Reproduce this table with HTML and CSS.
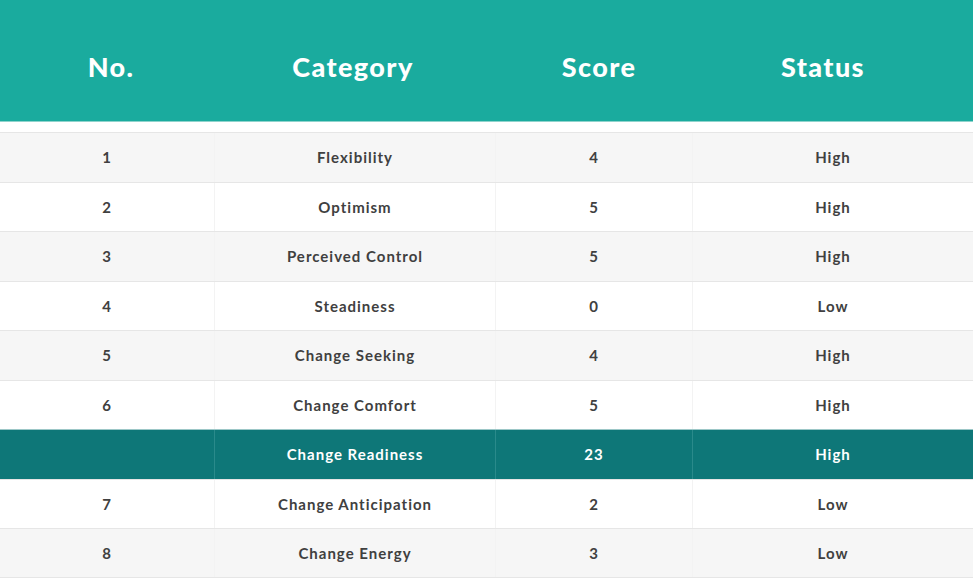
FILE: index.html
```html
<!DOCTYPE html>
<html>
<head>
<meta charset="utf-8">
<link rel="stylesheet" href="styles.css">
</head>
<body>
<div class="table">
  <div class="head">
    <div class="hcell">No.</div>
    <div class="hcell">Category</div>
    <div class="hcell">Score</div>
    <div class="hcell">Status</div>
    <div class="hcell"></div>
  </div>
  <div class="gap"></div>
  <div class="body">
    <div class="row alt"><div class="cell">1</div><div class="cell">Flexibility</div><div class="cell">4</div><div class="cell">High</div></div>
    <div class="row"><div class="cell">2</div><div class="cell">Optimism</div><div class="cell">5</div><div class="cell">High</div></div>
    <div class="row alt"><div class="cell">3</div><div class="cell">Perceived Control</div><div class="cell">5</div><div class="cell">High</div></div>
    <div class="row"><div class="cell">4</div><div class="cell">Steadiness</div><div class="cell">0</div><div class="cell">Low</div></div>
    <div class="row alt"><div class="cell">5</div><div class="cell">Change Seeking</div><div class="cell">4</div><div class="cell">High</div></div>
    <div class="row"><div class="cell">6</div><div class="cell">Change Comfort</div><div class="cell">5</div><div class="cell">High</div></div>
    <div class="row total"><div class="cell"></div><div class="cell">Change Readiness</div><div class="cell">23</div><div class="cell">High</div></div>
    <div class="row"><div class="cell">7</div><div class="cell">Change Anticipation</div><div class="cell">2</div><div class="cell">Low</div></div>
    <div class="row alt"><div class="cell">8</div><div class="cell">Change Energy</div><div class="cell">3</div><div class="cell">Low</div></div>
  </div>
</div>
</body>
</html>
```
FILE: styles.css
```css
html, body {
  margin: 0;
  padding: 0;
  background: #ffffff;
}
body {
  font-family: "Lato", "DejaVu Sans", sans-serif;
  overflow: hidden;
}
.table {
  width: 973px;
}
.head {
  display: grid;
  grid-template-columns: 222px 262px 230px 218px 1fr;
  height: 122px;
  background: #1aab9e;
  border-bottom: 1px solid #8fd3cc;
  box-sizing: border-box;
}
.hcell {
  display: flex;
  align-items: center;
  justify-content: center;
  color: #ffffff;
  font-weight: 900;
  font-size: 27px;
  letter-spacing: 1.4px;
  padding-top: 12px;
}
.gap {
  height: 10px;
  background: #ffffff;
}
.row {
  display: grid;
  grid-template-columns: 214px 281px 197px 1fr;
  height: 49.5px;
  border-top: 1px solid #e6e6e6;
  box-sizing: border-box;
  background: #ffffff;
}
.row:last-child {
  border-bottom: 1px solid #e6e6e6;
}
.row.alt {
  background: #f6f6f6;
}
.cell {
  display: flex;
  align-items: center;
  justify-content: center;
  color: #404040;
  font-weight: 700;
  font-size: 15px;
  letter-spacing: 1px;
}
.cell + .cell {
  border-left: 1px solid #f3f3f3;
}
.row.total {
  background: #0e7778;
  border-top-color: #9cc7c7;
}
.row.total .cell {
  color: #ffffff;
}
.row.total .cell + .cell {
  border-left-color: #2a8a8b;
}
```
